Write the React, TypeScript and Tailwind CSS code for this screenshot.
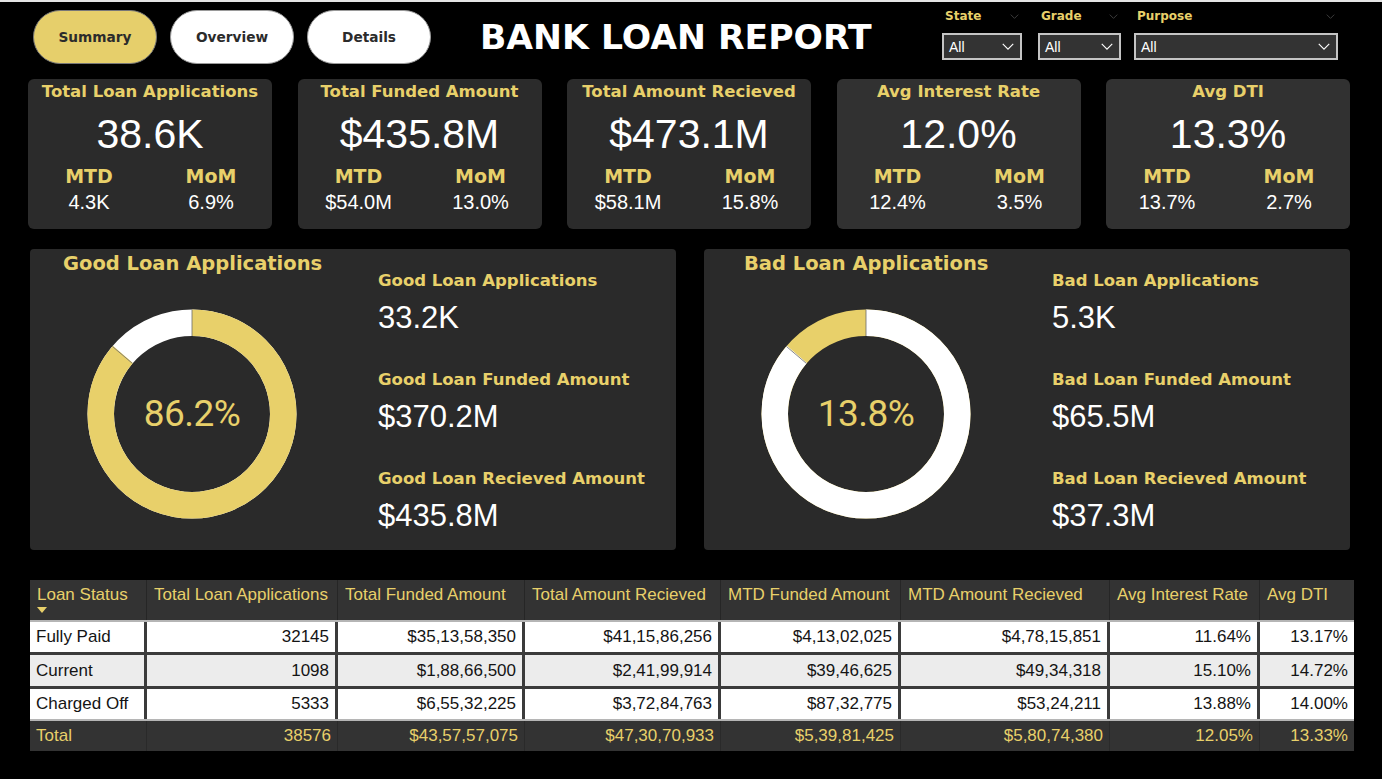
import React from 'react';

const YELLOW = '#e8d06a';

type Kpi = { title: string; value: string; mtd: string; mom: string; bg: string };

const kpis: Kpi[] = [
  { title: 'Total Loan Applications', value: '38.6K', mtd: '4.3K', mom: '6.9%', bg: 'bg-[#2b2b2b]' },
  { title: 'Total Funded Amount', value: '$435.8M', mtd: '$54.0M', mom: '13.0%', bg: 'bg-[#2b2b2b]' },
  { title: 'Total Amount Recieved', value: '$473.1M', mtd: '$58.1M', mom: '15.8%', bg: 'bg-[#2b2b2b]' },
  { title: 'Avg Interest Rate', value: '12.0%', mtd: '12.4%', mom: '3.5%', bg: 'bg-[#313131]' },
  { title: 'Avg DTI', value: '13.3%', mtd: '13.7%', mom: '2.7%', bg: 'bg-[#313131]' },
];

const columns = [
  { name: 'Loan Status', w: 'w-[117px]' },
  { name: 'Total Loan Applications', w: 'w-[191px]' },
  { name: 'Total Funded Amount', w: 'w-[187px]' },
  { name: 'Total Amount Recieved', w: 'w-[196px]' },
  { name: 'MTD Funded Amount', w: 'w-[180px]' },
  { name: 'MTD Amount Recieved', w: 'w-[209px]' },
  { name: 'Avg Interest Rate', w: 'w-[150px]' },
  { name: 'Avg DTI', w: 'w-[94px]' },
];

const rows = [
  { bg: 'bg-white', cells: ['Fully Paid', '32145', '$35,13,58,350', '$41,15,86,256', '$4,13,02,025', '$4,78,15,851', '11.64%', '13.17%'] },
  { bg: 'bg-[#ececec]', cells: ['Current', '1098', '$1,88,66,500', '$2,41,99,914', '$39,46,625', '$49,34,318', '15.10%', '14.72%'] },
  { bg: 'bg-white', cells: ['Charged Off', '5333', '$6,55,32,225', '$3,72,84,763', '$87,32,775', '$53,24,211', '13.88%', '14.00%'] },
];

const totals = ['Total', '38576', '$43,57,57,075', '$47,30,70,933', '$5,39,81,425', '$5,80,74,380', '12.05%', '13.33%'];

// heavy labels use a wide bold face
const HEAVY = "font-['DejaVu_Sans',sans-serif] font-bold";

function Chevron({ className }: { className?: string }) {
  return (
    <svg viewBox="0 0 14 8" className={className} fill="none" stroke="currentColor" strokeWidth="1.3">
      <path d="M1 1l6 6 6-6" />
    </svg>
  );
}

function Filter({ label, width }: { label: string; width: string }) {
  return (
    <div className={width}>
      <div className="flex items-center justify-between h-[16px] pl-[3px] pr-[3px]">
        <span className={`${HEAVY} text-[12px] text-[#e8d06a] leading-[16px]`}>{label}</span>
        <Chevron className="w-[9px] h-[5px] text-[#4a4a4a]" />
      </div>
      <div className="mt-[9px] h-[27px] bg-[#333] border-2 border-[#c4c4c4] flex items-center justify-between pl-[5px] pr-[5px]">
        <span className="text-[14px] text-white leading-none">All</span>
        <Chevron className="w-[14px] h-[7px] text-white" />
      </div>
    </div>
  );
}

function KpiCard({ k }: { k: Kpi }) {
  return (
    <div className={`w-[244px] h-[150px] rounded-[6px] ${k.bg} text-center pt-[3px]`}>
      <div className={`${HEAVY} text-[16.5px] leading-[20px] text-[#e8d06a] whitespace-nowrap`}>{k.title}</div>
      <div className="mt-[9px] text-[41px] leading-[46px] text-white">{k.value}</div>
      <div className="grid grid-cols-2 mt-[7px]">
        <div>
          <div className={`${HEAVY} text-[19px] leading-[24px] text-[#e8d06a]`}>MTD</div>
          <div className="mt-[3px] text-[20px] leading-[22px] text-white">{k.mtd}</div>
        </div>
        <div>
          <div className={`${HEAVY} text-[19px] leading-[24px] text-[#e8d06a]`}>MoM</div>
          <div className="mt-[3px] text-[20px] leading-[22px] text-white">{k.mom}</div>
        </div>
      </div>
    </div>
  );
}

function Donut({ main, rest, label }: { main: string; rest: string; label: string }) {
  const r = 91.25;
  const c = 2 * Math.PI * r;
  const pct = 0.862;
  const a = pct * 2 * Math.PI;
  const bx1 = 105 + 78 * Math.sin(a);
  const by1 = 105 - 78 * Math.cos(a);
  const bx2 = 105 + 104.5 * Math.sin(a);
  const by2 = 105 - 104.5 * Math.cos(a);
  return (
    <div className="relative w-[210px] h-[210px]">
      <svg width="210" height="210" viewBox="0 0 210 210">
        <circle cx="105" cy="105" r={r} fill="none" stroke={rest} strokeWidth="26.5" />
        <circle
          cx="105"
          cy="105"
          r={r}
          fill="none"
          stroke={main}
          strokeWidth="26.5"
          strokeDasharray={`${c * pct} ${c}`}
          transform="rotate(-90 105 105)"
        />
        <line x1="105" y1="0.5" x2="105" y2="27" stroke="#6b6b6b" strokeWidth="0.8" />
        <line x1={bx1} y1={by1} x2={bx2} y2={by2} stroke="#6b6b6b" strokeWidth="0.8" />
      </svg>
      <div className="absolute inset-0 flex items-center justify-center font-['Roboto',sans-serif] text-[37px] tracking-[-0.5px] text-[#e8d06a]">
        {label}
      </div>
    </div>
  );
}

function LoanPanel({
  title,
  titlePad,
  main,
  rest,
  pct,
  items,
}: {
  title: string;
  titlePad: string;
  main: string;
  rest: string;
  pct: string;
  items: { label: string; value: string }[];
}) {
  return (
    <div className="w-[646px] h-[301px] rounded-[4px] bg-[#2a2a2a] flex">
      <div className="w-[348px] shrink-0">
        <div className={`${titlePad} ${HEAVY} pt-[3px] text-[19.5px] leading-[24px] text-[#e8d06a]`}>{title}</div>
        <div className="mt-[33px] ml-[57px]">
          <Donut main={main} rest={rest} label={pct} />
        </div>
      </div>
      <div className="pt-[22px]">
        {items.map((it) => (
          <div key={it.label} className="h-[99px]">
            <div className={`${HEAVY} text-[16.5px] leading-[20px] text-[#e8d06a] whitespace-nowrap`}>{it.label}</div>
            <div className="mt-[9px] text-[31px] leading-[36px] text-white">{it.value}</div>
          </div>
        ))}
      </div>
    </div>
  );
}

function Table() {
  return (
    <div className="ml-[30px] w-[1324px] text-[17px]">
      <div className="flex h-[40px] bg-[#333]">
        {columns.map((col, i) => (
          <div
            key={col.name}
            className={`${col.w} shrink-0 pl-[7px] pt-[5px] leading-[20px] text-[#e8d06a] whitespace-nowrap overflow-hidden ${
              i < columns.length - 1 ? 'border-r border-[#262626]' : ''
            }`}
          >
            {col.name}
            {i === 0 && (
              <svg width="10" height="6" viewBox="0 0 10 6" className="mt-[2px]">
                <polygon points="0,0 10,0 5,6" fill={YELLOW} />
              </svg>
            )}
          </div>
        ))}
      </div>
      <div className="border-t-2 border-b-2 border-[#b5b5b5]">
        {rows.map((row, ri) => (
          <div
            key={row.cells[0]}
            className={`flex ${ri === 1 ? 'h-[34px]' : ri === 2 ? 'h-[33px]' : 'h-[30px]'} ${
              ri > 0 ? 'border-t-[3px] border-[#3b3b3b]' : ''
            }`}
          >
            {row.cells.map((cell, ci) => (
              <div
                key={ci}
                className={`${columns[ci].w} shrink-0 ${row.bg} flex items-center text-[#141414] whitespace-nowrap ${
                  ci === 0 ? 'pl-[6px] justify-start' : 'pr-[6px] justify-end'
                } ${ci < columns.length - 1 ? 'border-r-[3px] border-[#3b3b3b]' : ''}`}
              >
                {cell}
              </div>
            ))}
          </div>
        ))}
      </div>
      <div className="flex h-[30px] bg-[#333]">
        {totals.map((cell, ci) => (
          <div
            key={ci}
            className={`${columns[ci].w} shrink-0 flex items-center text-[#e8d06a] whitespace-nowrap ${
              ci === 0 ? 'pl-[6px] justify-start' : 'pr-[6px] justify-end'
            } ${ci < columns.length - 1 ? 'border-r border-[#2a2a2a]' : ''}`}
          >
            {cell}
          </div>
        ))}
      </div>
    </div>
  );
}

export default function App() {
  return (
    <div className="w-[1382px] h-[779px] bg-black border-t-2 border-[#e4e4e4] overflow-hidden font-['Liberation_Sans',Arial,sans-serif]">
      <header className="flex items-start pt-[6px] pl-[33px] pr-[44px]">
        <div className="flex gap-[13px] mt-[2px]">
          <button className={`w-[124px] h-[54px] rounded-full bg-[#e6cf6b] border border-[#777] text-[13.7px] ${HEAVY} text-[#2b2b2b]`}>
            Summary
          </button>
          <button className={`w-[124px] h-[54px] rounded-full bg-white border border-[#9a9a9a] text-[13.7px] ${HEAVY} text-[#2b2b2b]`}>
            Overview
          </button>
          <button className={`w-[124px] h-[54px] rounded-full bg-white border border-[#9a9a9a] text-[13.7px] ${HEAVY} text-[#2b2b2b]`}>
            Details
          </button>
        </div>
        <h1 className={`ml-[49px] mt-[2px] h-[54px] flex items-center text-[34.6px] ${HEAVY} text-white leading-none`}>
          BANK LOAN REPORT
        </h1>
        <div className="ml-auto flex">
          <Filter label="State" width="w-[80px]" />
          <div className="ml-[16px]">
            <Filter label="Grade" width="w-[83px]" />
          </div>
          <div className="ml-[13px]">
            <Filter label="Purpose" width="w-[204px]" />
          </div>
        </div>
      </header>

      <section className="mt-[15px] pl-[28px] flex gap-[25.5px]">
        {kpis.map((k) => (
          <KpiCard key={k.title} k={k} />
        ))}
      </section>

      <section className="mt-[20px] pl-[30px] flex gap-[28px]">
        <LoanPanel
          title="Good Loan Applications"
          titlePad="pl-[33px]"
          main={YELLOW}
          rest="#ffffff"
          pct="86.2%"
          items={[
            { label: 'Good Loan Applications', value: '33.2K' },
            { label: 'Good Loan Funded Amount', value: '$370.2M' },
            { label: 'Good Loan Recieved Amount', value: '$435.8M' },
          ]}
        />
        <LoanPanel
          title="Bad Loan Applications"
          titlePad="pl-[40px]"
          main="#ffffff"
          rest={YELLOW}
          pct="13.8%"
          items={[
            { label: 'Bad Loan Applications', value: '5.3K' },
            { label: 'Bad Loan Funded Amount', value: '$65.5M' },
            { label: 'Bad Loan Recieved Amount', value: '$37.3M' },
          ]}
        />
      </section>

      <section className="mt-[30px]">
        <Table />
      </section>
    </div>
  );
}
